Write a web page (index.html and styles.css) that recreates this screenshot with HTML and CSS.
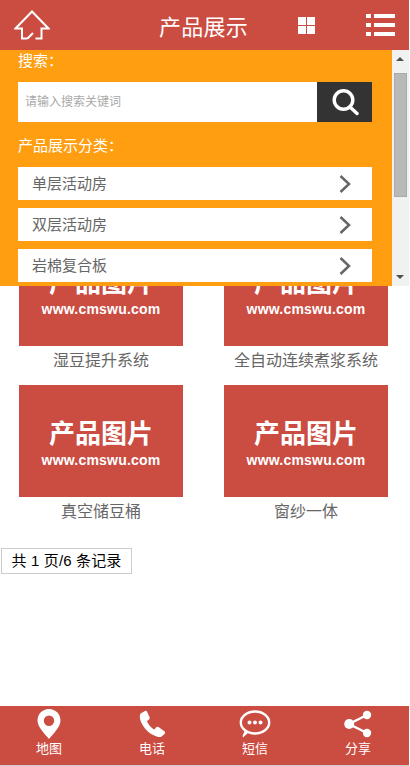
FILE: index.html
```html
<!DOCTYPE html>
<html lang="zh-CN">
<head>
<meta charset="utf-8">
<title>产品展示</title>
<link rel="stylesheet" href="styles.css">
</head>
<body>
<div class="page">
  <header class="top">
    <svg class="ico-home" viewBox="0 0 36 30" width="36" height="30"><path d="M13.500 28.500H8V18.500H1.500L18 1.500L34.500 18.500H27.500V28.500H21.500M13.500 28.500L19 23" fill="none" stroke="#fff" stroke-width="2"/></svg>
    <h1 class="title">产品展示</h1>
    <svg class="ico-grid" viewBox="0 0 17 17" width="17" height="17"><path d="M0 0h8v8H0zM9 0h8v8H9zM0 9h8v8H0zM9 9h8v8H9z" fill="#fff"/></svg>
    <svg class="ico-menu" viewBox="0 0 29 23" width="29" height="23"><path d="M0 0h5v4H0zM8 0h21v4H8zM0 9h5v4H0zM8 9h21v4H8zM0 18h5v4H0zM8 18h21v4H8z" fill="#fff"/></svg>
  </header>

  <main class="list">
    <div class="grid">
      <a class="card"><div class="pic"><b class="pic-t">产品图片</b><span class="pic-u">www.cmswu.com</span></div><p class="cap">湿豆提升系统</p></a>
      <a class="card"><div class="pic"><b class="pic-t">产品图片</b><span class="pic-u">www.cmswu.com</span></div><p class="cap">全自动连续煮浆系统</p></a>
      <a class="card"><div class="pic"><b class="pic-t">产品图片</b><span class="pic-u">www.cmswu.com</span></div><p class="cap">真空储豆桶</p></a>
      <a class="card"><div class="pic"><b class="pic-t">产品图片</b><span class="pic-u">www.cmswu.com</span></div><p class="cap">窗纱一体</p></a>
    </div>
    <div class="pager">共 1 页/6 条记录</div>
  </main>

  <footer class="foot">
    <div class="tabs">
      <a class="tab">
        <svg viewBox="0 0 24 30" width="24" height="30"><path fill-rule="evenodd" d="M12 0C5.500 0 .5 5 .5 11.500C.5 18 8 25 12 30C16 25 23.500 18 23.500 11.500C23.500 5 18.500 0 12 0ZM12 6.500A5.200 5.200 0 1 1 12 16.900A5.200 5.200 0 1 1 12 6.500Z" fill="#fff"/></svg>
        <span>地图</span>
      </a>
      <a class="tab">
        <svg viewBox="0 0 26 27" width="26" height="27"><path d="M6 .5L1.500 3C-.5 7 2 13 6 18C11 24 18 27 22 26.500L25.500 23.500C26.500 22 26 21 25 20.500L19.500 16.500C18 16 17 16.500 15.500 19C13 18.500 8.500 13 8 10.500C10.500 9 11 8 10.500 6.500L8 1C7.500 0 7 0 6 .5Z" fill="#fff"/></svg>
        <span>电话</span>
      </a>
      <a class="tab">
        <svg viewBox="0 0 32 28" width="32" height="28"><ellipse cx="16" cy="12.500" rx="14.200" ry="11" fill="none" stroke="#fff" stroke-width="2.400"/><path d="M4 27.500L10 22L6 19.500Q4.500 24 3.500 26Z" fill="#fff"/><circle cx="10.500" cy="12.500" r="2" fill="#fff"/><circle cx="16" cy="12.500" r="2" fill="#fff"/><circle cx="21.500" cy="12.500" r="2" fill="#fff"/></svg>
        <span>短信</span>
      </a>
      <a class="tab">
        <svg viewBox="0 0 28 27" width="28" height="27"><path d="M23 4.500L5 13.500L23 22.500" fill="none" stroke="#fff" stroke-width="2.500"/><circle cx="23" cy="4.500" r="4.200" fill="#fff"/><circle cx="5.200" cy="13.500" r="5" fill="#fff"/><circle cx="23" cy="22.500" r="4.200" fill="#fff"/></svg>
        <span>分享</span>
      </a>
    </div>
  </footer>

  <aside class="panel">
    <div class="panel-body">
      <div class="label first">搜索：</div>
      <form class="search">
        <div class="search-input">请输入搜索关键词</div>
        <div class="search-btn">
          <svg viewBox="0 0 28 28" width="28" height="28"><circle cx="12.500" cy="12" r="9.300" fill="none" stroke="#fff" stroke-width="3.400"/><path d="M19 19L26 25.500" stroke="#fff" stroke-width="3.400" stroke-linecap="round"/></svg>
        </div>
      </form>
      <div class="label second">产品展示分类：</div>
      <a class="cat"><span>单层活动房</span><svg viewBox="0 0 12 18" width="12" height="18"><path d="M1.500 1L10 9L1.500 17" fill="none" stroke="#666" stroke-width="2.500"/></svg></a>
      <a class="cat"><span>双层活动房</span><svg viewBox="0 0 12 18" width="12" height="18"><path d="M1.500 1L10 9L1.500 17" fill="none" stroke="#666" stroke-width="2.500"/></svg></a>
      <a class="cat"><span>岩棉复合板</span><svg viewBox="0 0 12 18" width="12" height="18"><path d="M1.500 1L10 9L1.500 17" fill="none" stroke="#666" stroke-width="2.500"/></svg></a>
    </div>
    <div class="sbar">
      <i class="arrow up"></i>
      <i class="thumb"></i>
      <i class="arrow down"></i>
    </div>
  </aside>
</div>
</body>
</html>
```
FILE: styles.css
```css
* { box-sizing: border-box; }
html, body { margin: 0; padding: 0; }
body { font-family: "Noto Sans CJK SC", "Liberation Sans", sans-serif; background: #fff; overflow: hidden; }
.page { position: relative; width: 409px; height: 766px; display: flex; flex-direction: column; }

.top { height: 50px; background: #cb4c41; display: flex; align-items: center; position: relative; flex: none; }
.ico-home { margin-left: 14px; flex: none; }
.title { margin: 0 0 0 109px; font-size: 22px; font-weight: 400; color: #fff; line-height: 50px; width: 88px; letter-spacing: .25px; white-space: nowrap; flex: none; }
.ico-grid { margin-left: 51px; flex: none; }
.ico-menu { margin-left: 51px; flex: none; }

.list { flex: 1; padding-top: 184px; }
.grid { display: grid; grid-template-columns: 164px 164px; column-gap: 41px; row-gap: 0; padding-left: 19px; }
.card { display: block; height: 151px; }
.pic { height: 112px; background: #cb4c41; color: #fff; display: flex; flex-direction: column; align-items: center; padding-top: 27px; }
.pic-t { font-size: 26px; line-height: 39px; font-weight: 700; white-space: nowrap; }
.pic-u { font-family: "Liberation Sans", sans-serif; font-weight: 700; font-size: 14px; line-height: 18px; letter-spacing: .2px; }
.cap { margin: 0; text-align: center; font-size: 16px; line-height: 27px; color: #666; }
.pager { margin: 12px 0 0 1px; width: 131px; height: 26px; border: 1px solid #ccc; color: #000; font-family: "Liberation Sans", "Noto Sans CJK SC", sans-serif; font-size: 15px; line-height: 24px; letter-spacing: .15px; text-align: center; white-space: nowrap; }

.foot { height: 60px; flex: none; background: #cb4c41; border-bottom: 1px solid #ccc; overflow: hidden; }
.tabs { display: grid; grid-template-columns: repeat(4, 103px); margin-left: -2.5px; width: 412px; }
.tab { display: flex; flex-direction: column; align-items: center; color: #fff; font-size: 13px; line-height: 16px; padding-top: 3px; height: 59px; }
.tab svg { display: block; height: 30px; flex: none; }
.tab span { margin-top: 1px; }

.panel { position: absolute; left: 0; top: 50px; width: 409px; height: 236px; display: flex; }
.panel-body { width: 392px; background: #ff9e10; padding: 0 20px 0 18px; color: #fff; overflow: hidden; }
.label { font-family: "Noto Sans CJK TC", "Noto Sans CJK SC", sans-serif; font-size: 15px; line-height: 20px; }
.first { height: 32px; padding-top: 0; line-height: 19px; }
.second { margin-top: 13px; height: 32px; }
.search { display: flex; height: 40px; }
.search-input { width: 299px; background: #fff; color: #aaa; font-size: 12px; line-height: 38px; padding-left: 7px; }
.search-btn { width: 55px; background: #333; display: flex; align-items: center; justify-content: center; }
.cat { display: flex; align-items: center; justify-content: space-between; height: 33px; margin-bottom: 8px; background: #fff; color: #666; font-size: 15px; line-height: 31px; padding: 0 21px 0 14px; }
.cat span { display: block; height: 33px; }
.cat svg { display: block; }

.sbar { width: 17px; background: #f1f1f1; position: relative; }
.thumb { display: block; position: absolute; left: 2px; top: 23px; width: 13px; height: 124px; background: #b9b9b9; border: 1px solid #aaa; }
.arrow { position: absolute; left: 4px; width: 0; height: 0; border-left: 4px solid transparent; border-right: 4px solid transparent; }
.up { top: 7px; border-bottom: 4px solid #505050; }
.down { bottom: 7px; border-top: 4px solid #505050; }
```
